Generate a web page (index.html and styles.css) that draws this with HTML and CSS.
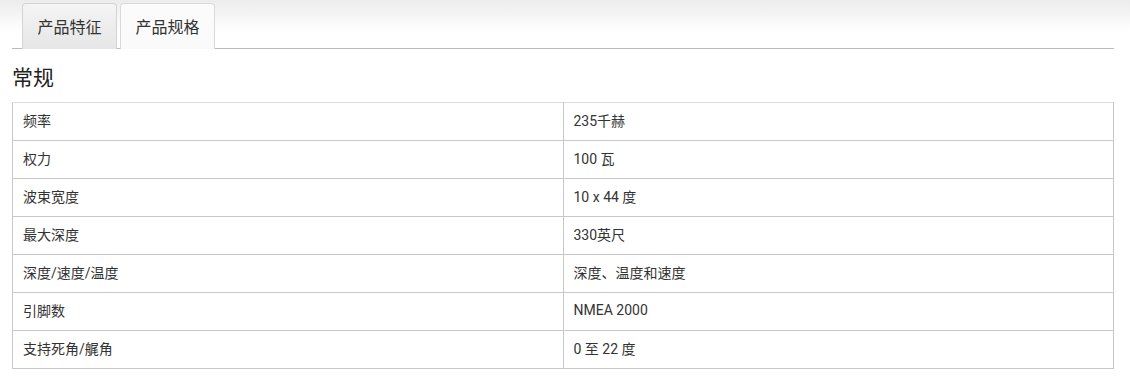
FILE: index.html
```html
<!DOCTYPE html>
<html lang="zh">
<head>
<meta charset="utf-8">
<link rel="stylesheet" href="styles.css">
</head>
<body>
<div class="top-bg"></div>
<div class="wrap">
  <ul class="tabs">
    <li class="tab">产品特征</li>
    <li class="tab active">产品规格</li>
  </ul>
  <h2 class="title">常规</h2>
  <table class="spec">
    <tr><td>频率</td><td>235千赫</td></tr>
    <tr><td>权力</td><td>100 瓦</td></tr>
    <tr><td>波束宽度</td><td>10 x 44 度</td></tr>
    <tr><td>最大深度</td><td>330英尺</td></tr>
    <tr><td>深度/速度/温度</td><td>深度、温度和速度</td></tr>
    <tr><td>引脚数</td><td>NMEA 2000</td></tr>
    <tr><td>支持死角/艉角</td><td>0 至 22 度</td></tr>
  </table>
</div>
</body>
</html>
```
FILE: styles.css
```css
html, body {
  margin: 0;
  padding: 0;
  background: #fff;
}
body {
  font-family: Roboto, "Noto Sans CJK SC", sans-serif;
  color: #333;
  position: relative;
}
.top-bg {
  position: absolute;
  left: 0;
  right: 0;
  top: 0;
  height: 32px;
  background: linear-gradient(#ececec, #fff);
  z-index: 0;
}
.wrap {
  position: relative;
  z-index: 1;
  margin: 0 16px 0 12px;
  padding-top: 3px;
}
.tabs {
  list-style: none;
  margin: 0;
  padding: 0 0 0 10px;
  display: flex;
  gap: 3px;
  border-bottom: 1px solid #bbb;
  height: 45px;
}
.tab {
  box-sizing: border-box;
  width: 95px;
  height: 46px;
  border: 1px solid #d4d4d4;
  border-bottom: none;
  border-radius: 4px 4px 0 0;
  background: linear-gradient(#f4f4f4, #e6e6e6);
  font-size: 16px;
  color: #333;
  display: flex;
  align-items: center;
  justify-content: center;
  padding-bottom: 2px;
}
.tab.active {
  background: linear-gradient(#fbfbfb, #fafafa);
  border-color: #dadada;
  position: relative;
  z-index: 2;
}
.title {
  margin: 0;
  padding: 16px 0 11px;
  font-size: 21px;
  font-weight: normal;
  line-height: 26px;
  color: #222;
}
.spec {
  width: 100%;
  border-collapse: collapse;
  font-size: 14px;
}
.spec td {
  border: 1px solid #c8c8c8;
  height: 38px;
  box-sizing: border-box;
  padding: 0 10px 3px;
  width: 50%;
}
.spec tr:first-child td {
  border-top-color: #dcdcdc;
}
```
